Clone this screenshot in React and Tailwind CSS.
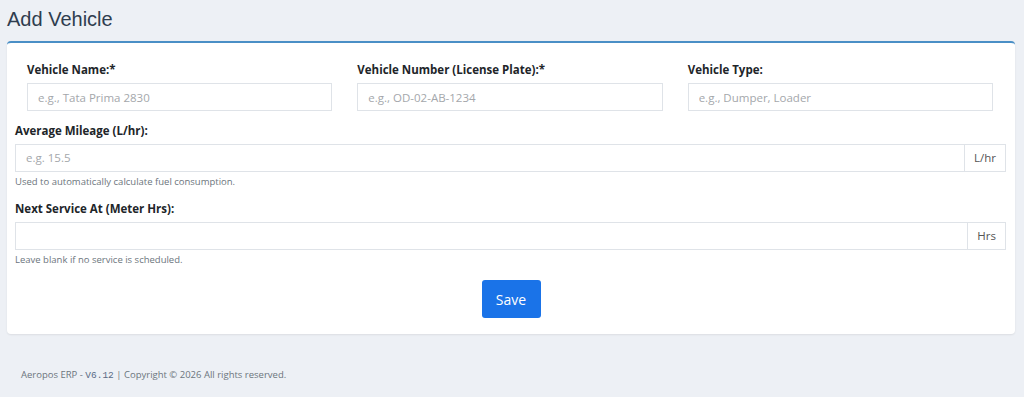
import React, { useState } from 'react';

const font = { fontFamily: '"Open Sans", "Noto Sans", sans-serif' };

function Field({ label, placeholder, value, onChange }) {
  return (
    <div className="flex flex-col">
      <label className="text-[11.5px] font-bold text-[#212529] mb-[5px] leading-[16px]">{label}</label>
      <input
        type="text"
        placeholder={placeholder}
        value={value}
        onChange={(e) => onChange(e.target.value)}
        className="h-[28px] w-full border border-[#dfe3e8] px-[10px] text-[11.5px] text-[#333] placeholder:text-[#a4a7ab] outline-none"
      />
    </div>
  );
}

function AddonField({ label, placeholder, addon, help, value, onChange }) {
  return (
    <div className="flex flex-col">
      <label className="text-[11.5px] font-bold text-[#212529] mb-[5px] leading-[16px]">{label}</label>
      <div className="flex h-[28px]">
        <input
          type="text"
          placeholder={placeholder}
          value={value}
          onChange={(e) => onChange(e.target.value)}
          className="flex-1 border border-[#dfe3e8] px-[10px] text-[11.5px] text-[#333] placeholder:text-[#a4a7ab] outline-none"
        />
        <span className="flex items-center border border-l-0 border-[#dfe3e8] px-[9px] text-[11.5px] text-[#555]">{addon}</span>
      </div>
      <p className="mt-[3px] text-[9.5px] leading-[14px] text-[#6c757d]">{help}</p>
    </div>
  );
}

export default function App() {
  const [name, setName] = useState('');
  const [number, setNumber] = useState('');
  const [type, setType] = useState('');
  const [mileage, setMileage] = useState('');
  const [service, setService] = useState('');

  return (
    <div className="min-h-[397px] w-[1024px] bg-[#edf0f5]" style={font}>
      <div className="px-[7px] pt-[5px]">
        <h1 className="text-[20px] leading-[28px] text-[#2f3d4f]" style={{ fontFamily: '"Liberation Sans", Arial, sans-serif' }}>
          Add Vehicle
        </h1>
        <form
          onSubmit={(e) => e.preventDefault()}
          className="mt-[8px] w-[1008px] rounded-[4px] border-t-2 border-[#4a8fc6] bg-white shadow-[0_1px_2px_rgba(0,0,0,0.08)] pb-[16px]"
        >
          <div className="grid grid-cols-3 gap-x-[25px] pl-[20px] pr-[22px] pt-[19px]">
            <Field label="Vehicle Name:*" placeholder="e.g., Tata Prima 2830" value={name} onChange={setName} />
            <Field label="Vehicle Number (License Plate):*" placeholder="e.g., OD-02-AB-1234" value={number} onChange={setNumber} />
            <Field label="Vehicle Type:" placeholder="e.g., Dumper, Loader" value={type} onChange={setType} />
          </div>
          <div className="flex flex-col gap-[12px] pl-[8px] pr-[9px] pt-[12px]">
            <AddonField
              label="Average Mileage (L/hr):"
              placeholder="e.g. 15.5"
              addon="L/hr"
              help="Used to automatically calculate fuel consumption."
              value={mileage}
              onChange={setMileage}
            />
            <AddonField
              label="Next Service At (Meter Hrs):"
              placeholder=""
              addon="Hrs"
              help="Leave blank if no service is scheduled."
              value={service}
              onChange={setService}
            />
          </div>
          <div className="flex justify-center pt-[13px]">
            <button type="submit" className="h-[38px] w-[59px] rounded-[3px] bg-[#1a73e8] text-[14px] text-white">
              Save
            </button>
          </div>
        </form>
      </div>
      <footer className="px-[21px] pt-[34px] text-[9.5px] text-[#6c757d]">
        Aeropos ERP - <span className="text-[#5a6b85]" style={{ fontFamily: '"Liberation Mono", monospace' }}>V6.12</span> | Copyright © 2026 All rights reserved.
      </footer>
    </div>
  );
}
